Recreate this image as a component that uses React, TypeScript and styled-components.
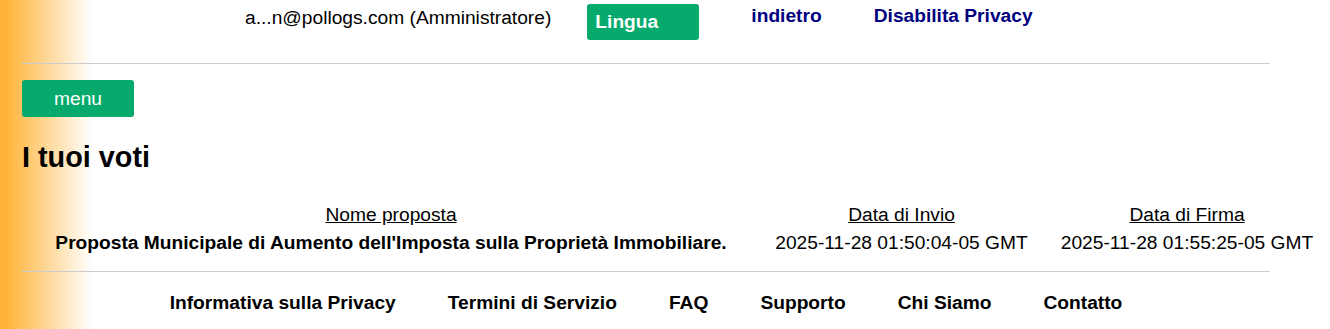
import React from 'react'
import styled, { createGlobalStyle } from 'styled-components'

const GlobalStyle = createGlobalStyle`
  html, body {
    margin: 0;
    padding: 0;
  }
  body {
    min-height: 100vh;
    background: linear-gradient(90deg, #ffb234 4px, #ffffff 92px);
    font-family: "Liberation Sans", Arial, sans-serif;
    font-size: 19.2px;
    color: #000;
  }
`

const Page = styled.div`
  width: 1248px;
  padding: 0 0 0 22px;
`

const TopBar = styled.div`
  display: flex;
  align-items: flex-start;
  padding: 4px 0 0 223px;
  height: 59px;
`

const UserLabel = styled.span`
  line-height: 22px;
  margin-top: 3px;
  margin-right: 36px;
`

const LangButton = styled.button`
  width: 112px;
  height: 36px;
  border: none;
  border-radius: 3px;
  background: #05aa6c;
  color: #fff;
  font-family: inherit;
  font-size: 19.2px;
  font-weight: bold;
  text-align: left;
  padding: 0 8px;
  margin-right: 52px;
`

const NavLink = styled.a`
  color: #000080;
  font-weight: bold;
  text-decoration: none;
  line-height: 22px;
  margin-top: 1px;
  margin-right: 52px;
`

const Rule = styled.hr`
  border: none;
  border-top: 1px solid #cccccc;
  margin: 0;
`

const MenuButton = styled.button`
  display: block;
  width: 112px;
  height: 37px;
  margin-top: 16px;
  border: none;
  border-radius: 3px;
  background: #05aa6c;
  color: #fff;
  font-family: inherit;
  font-size: 19.2px;
`

const Title = styled.h2`
  font-size: 28.8px;
  font-weight: bold;
  margin: 23px 0 0;
  line-height: 34px;
`

const VotesTable = styled.table`
  table-layout: fixed;
  border-collapse: collapse;
  width: 1293px;
  margin: 27px 0 0 8px;
`

const HeadCell = styled.th`
  font-weight: normal;
  text-decoration: underline;
  text-align: center;
  padding: 0;
  height: 28px;
  line-height: 22px;
`

const Cell = styled.td<{ $bold?: boolean }>`
  font-weight: ${p => (p.$bold ? 'bold' : 'normal')};
  text-align: center;
  padding: 0;
  height: 28px;
  line-height: 22px;
  white-space: nowrap;
`

const TableRule = styled(Rule)`
  margin-top: 14px;
`

const Footer = styled.nav`
  display: flex;
  justify-content: center;
  gap: 52px;
  padding-top: 20px;
`

const FooterLink = styled.a`
  color: #000;
  font-weight: bold;
  text-decoration: none;
  line-height: 22px;
`

const footerLinks = [
  'Informativa sulla Privacy',
  'Termini di Servizio',
  'FAQ',
  'Supporto',
  'Chi Siamo',
  'Contatto',
]

export default function App() {
  return (
    <>
      <GlobalStyle />
      <Page>
        <TopBar>
          <UserLabel>a...n@pollogs.com (Amministratore)</UserLabel>
          <LangButton type="button">Lingua</LangButton>
          <NavLink href="#">indietro</NavLink>
          <NavLink href="#">Disabilita Privacy</NavLink>
        </TopBar>
        <Rule />
        <MenuButton type="button">menu</MenuButton>
        <Title>I tuoi voti</Title>
        <VotesTable>
          <colgroup>
            <col style={{ width: 722 }} />
            <col style={{ width: 299 }} />
            <col style={{ width: 272 }} />
          </colgroup>
          <thead>
            <tr>
              <HeadCell>Nome proposta</HeadCell>
              <HeadCell>Data di Invio</HeadCell>
              <HeadCell>Data di Firma</HeadCell>
            </tr>
          </thead>
          <tbody>
            <tr>
              <Cell $bold>
                Proposta Municipale di Aumento dell'Imposta sulla Proprietà Immobiliare.
              </Cell>
              <Cell>2025-11-28 01:50:04-05 GMT</Cell>
              <Cell>2025-11-28 01:55:25-05 GMT</Cell>
            </tr>
          </tbody>
        </VotesTable>
        <TableRule />
        <Footer>
          {footerLinks.map(l => (
            <FooterLink key={l} href="#">
              {l}
            </FooterLink>
          ))}
        </Footer>
      </Page>
    </>
  )
}
